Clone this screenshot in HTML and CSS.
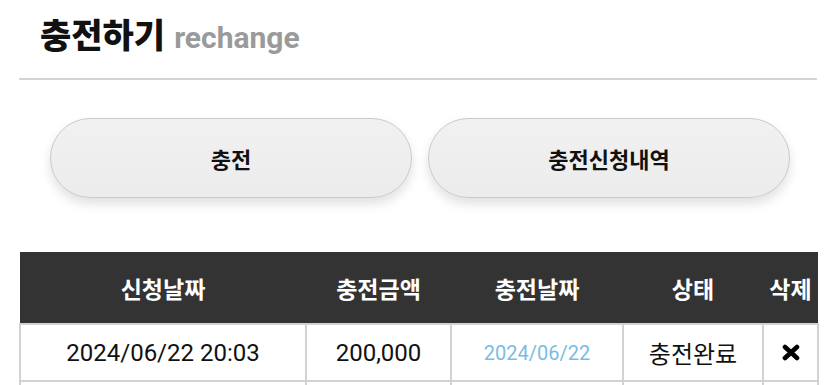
FILE: index.html
```html
<!DOCTYPE html>
<html lang="ko">
<head>
<meta charset="utf-8">
<title>충전하기</title>
<link rel="stylesheet" href="styles.css">
</head>
<body>
<div class="page">
  <header class="page-head">
    <h1 class="title"><span class="title-main">충전하기</span><span class="title-sub">rechange</span></h1>
  </header>
  <nav class="tabs">
    <button class="tab-btn" type="button">충전</button>
    <button class="tab-btn" type="button">충전신청내역</button>
  </nav>
  <table class="history">
    <colgroup>
      <col class="c-req">
      <col class="c-amt">
      <col class="c-date">
      <col class="c-state">
      <col class="c-del">
    </colgroup>
    <thead>
      <tr>
        <th>신청날짜</th>
        <th>충전금액</th>
        <th>충전날짜</th>
        <th>상태</th>
        <th>삭제</th>
      </tr>
    </thead>
    <tbody>
      <tr>
        <td>2024/06/22 20:03</td>
        <td>200,000</td>
        <td class="done-date">2024/06/22</td>
        <td>충전완료</td>
        <td class="del"><svg class="del-icon" viewBox="0 0 18 17" width="18" height="17" aria-label="삭제"><path d="M3 3 L15 14 M15 3 L3 14" stroke="#000" stroke-width="4.6" stroke-linecap="round" fill="none"/></svg></td>
      </tr>
      <tr>
        <td>&nbsp;</td>
        <td>&nbsp;</td>
        <td>&nbsp;</td>
        <td>&nbsp;</td>
        <td>&nbsp;</td>
      </tr>
    </tbody>
  </table>
</div>
</body>
</html>
```

FILE: styles.css
```css
html, body {
  margin: 0;
  padding: 0;
  background: #ffffff;
}

body {
  font-family: Roboto, "Noto Sans CJK KR", sans-serif;
  color: #111111;
}

.page {
  padding: 0 18px 0 19px;
}

.page-head {
  border-bottom: 2px solid #d4d4d4;
  padding: 11px 0 21px 21px;
}

.title {
  margin: 0;
  display: flex;
  align-items: baseline;
  column-gap: 9px;
  height: 46px;
  font-weight: 700;
}

.title-main {
  font-family: "Noto Sans CJK KR", sans-serif;
  font-size: 34px;
  line-height: 46px;
  font-weight: 900;
  color: #111111;
}

.title-sub {
  font-family: Roboto, sans-serif;
  font-size: 30px;
  line-height: 46px;
  font-weight: 700;
  color: #9a9a9a;
}

.tabs {
  display: grid;
  grid-template-columns: 362px 362px;
  column-gap: 16px;
  padding: 38px 0 0 31px;
}

.tab-btn {
  box-sizing: border-box;
  height: 80px;
  border: 1px solid #c9c9c9;
  border-radius: 40px;
  background: linear-gradient(#f1f1f1, #ececec);
  box-shadow: 0 6px 11px rgba(0, 0, 0, 0.12);
  font-family: "Noto Sans CJK KR", sans-serif;
  font-size: 22px;
  font-weight: 700;
  color: #111111;
  padding: 0;
}

.history {
  margin-top: 54px;
  width: 798px;
  border-collapse: collapse;
  table-layout: fixed;
}

.c-req { width: 286px; }
.c-amt { width: 145px; }
.c-date { width: 172px; }
.c-state { width: 140px; }
.c-del { width: 55px; }

.history th {
  background: #333333;
  color: #ffffff;
  font-family: "Noto Sans CJK KR", sans-serif;
  font-size: 23px;
  font-weight: 700;
  height: 71px;
  padding: 0;
  text-align: center;
  white-space: nowrap;
  border: none;
  border-bottom: 1px solid #8a8a8a;
}

.history td {
  border: 2px solid #d2d2d2;
  height: 55px;
  padding: 0;
  text-align: center;
  font-family: Roboto, "Noto Sans CJK KR", sans-serif;
  font-size: 24px;
  color: #111111;
  white-space: nowrap;
}

.history td.done-date {
  color: #7cbbe3;
  font-size: 20px;
}

.history td.del {
  line-height: 0;
}

.del-icon {
  display: inline-block;
  vertical-align: middle;
}
```
